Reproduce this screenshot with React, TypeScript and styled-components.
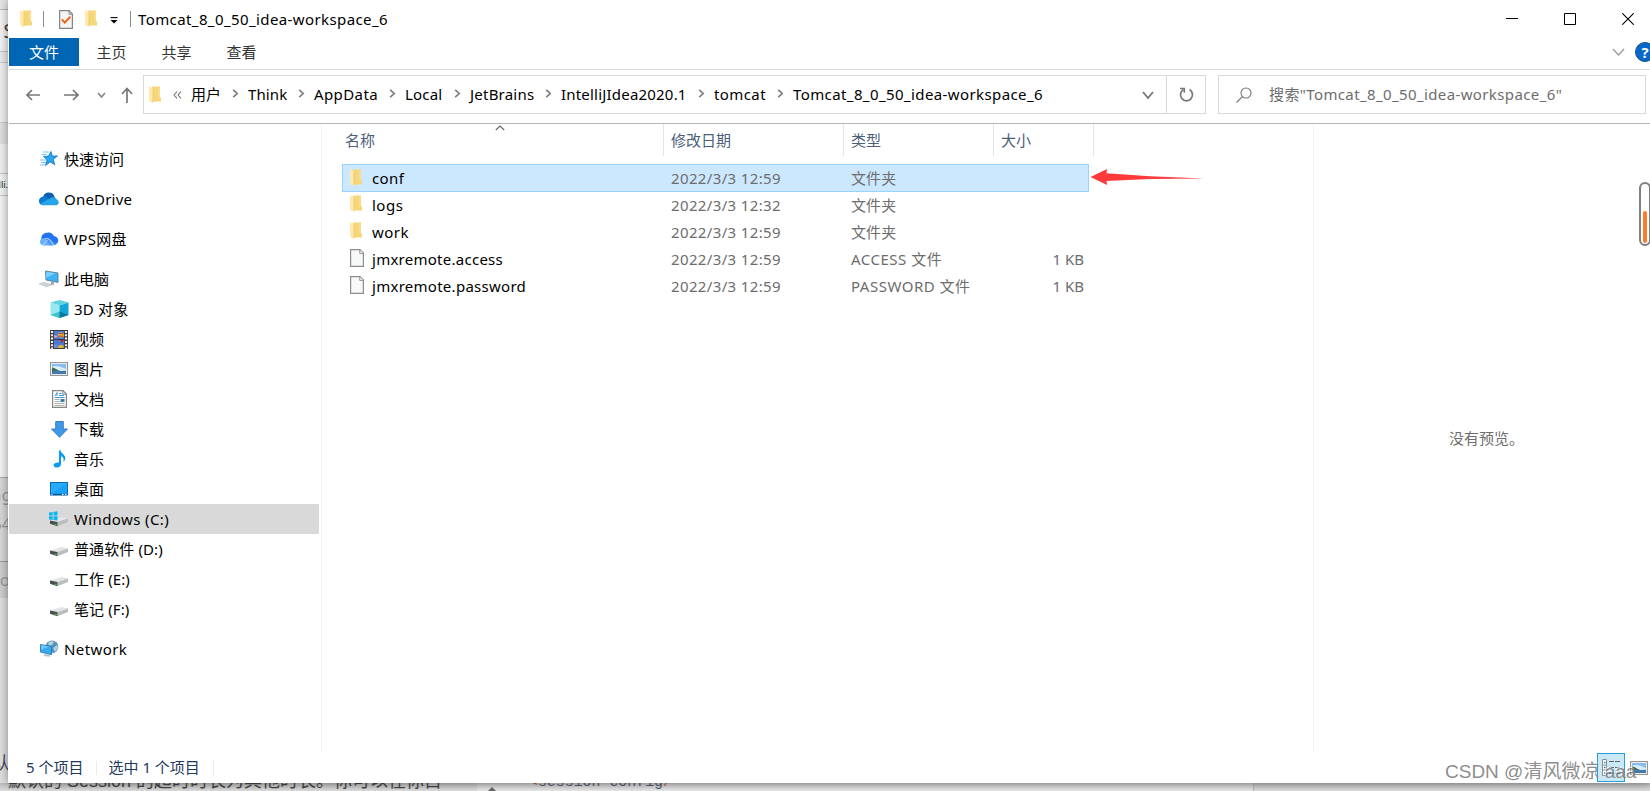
import React from 'react';
import styled, { createGlobalStyle, css } from 'styled-components';

const GlobalStyle = createGlobalStyle`
  * { box-sizing: border-box; }
  body { margin: 0; background: #dcdcdc; }
  svg { display: block; flex: none; }
`;

const Page = styled.div`
  display: grid;
  grid-template: 783px 8px / 8px 1fr;
  width: 1650px;
  height: 791px;
  overflow: hidden;
  font: 15px/20px 'Noto Sans', 'Noto Sans CJK SC', sans-serif;
  color: #000;
  white-space: nowrap;
`;

/* Page behind the window: left edge and bottom edge */
const BackEdge = styled.div`
  display: flex;
  flex-direction: column;
  overflow: hidden;
`;
const BackBlock = styled.div<{ $h: number; $bg: string; $line?: string }>`
  display: flex;
  align-items: center;
  justify-content: flex-end;
  flex: none;
  height: ${p => p.$h}px;
  background: ${p => p.$bg};
  border-bottom: 1px solid ${p => p.$line ?? p.$bg};
`;
const BackText = styled.span<{ $size: number; $color: string; $shift?: number }>`
  font-size: ${p => p.$size}px;
  color: ${p => p.$color};
  margin-right: ${p => p.$shift ?? 0}px;
`;
const BackFloor = styled.div`
  grid-column: 1 / 3;
  display: flex;
  height: 8px;
  overflow: hidden;
  background: linear-gradient(#b9b9b9, #dedede);
`;
const FloorText = styled.div`
  width: 469px;
  margin: -15px 0 0 8px;
  font-family: 'Liberation Sans', 'Noto Sans CJK SC', sans-serif;
  font-size: 18px;
  line-height: 26px;
  color: #444;
`;
const FloorCode = styled.div`
  display: flex;
  width: 777px;
  border-right: 1px solid #b4b4b4;
  background: linear-gradient(#c6c6c6, #e8e8e8);
  padding-left: 11px;
`;
const CodeLine = styled.div`
  margin: -11px 0 0 33px;
  font: 14.9px/20px 'Liberation Mono', monospace;
  color: #555b70;
  i { font-style: normal; color: #c75a28; }
`;

const Window = styled.div`
  position: relative;
  display: flex;
  flex-direction: column;
  background: #fff;
  box-shadow: 0 0 9px rgba(0, 0, 0, 0.42);
`;
const TitleBar = styled.header`
  display: flex;
  align-items: center;
  height: 38px;
  padding-left: 12px;
`;
const TitleRule = styled.div`
  width: 1px;
  height: 16px;
  background: #8e8e8e;
`;
const QuickMenu = styled.div`
  padding-top: 3px;
`;
const Title = styled.div`
  margin-left: 7px;
  flex: 1;
  letter-spacing: 0.4px;
`;
const Captions = styled.div`
  display: flex;
  align-items: center;
  gap: 46px;
  padding-right: 16px;
`;
const Spacer = styled.div<{ $w: number }>`
  flex: none;
  width: ${p => p.$w}px;
`;

const Ribbon = styled.nav`
  display: flex;
  align-items: center;
  height: 32px;
  padding-bottom: 3px;
  border-bottom: 1px solid #dadbdc;
  margin-left: 1px;
`;
const Tab = styled.div<{ $file?: boolean }>`
  display: flex;
  align-items: center;
  justify-content: center;
  width: ${p => (p.$file ? 70 : 65)}px;
  height: 28px;
  color: ${p => (p.$file ? '#fff' : '#333')};
  background: ${p => (p.$file ? '#0066b4' : 'transparent')};
`;
const Tabs = styled.div`
  display: flex;
  flex: 1;
`;
const Help = styled.div`
  flex: none;
  width: 20px;
  height: 20px;
  margin: 0 -5px 0 10px;
  border-radius: 50%;
  border: 1px solid #1c4f84;
  background: #0669c9;
  color: #fff;
  font: bold 15px/18px 'Open Sans', sans-serif;
  text-align: center;
`;

const AddressRow = styled.div`
  display: flex;
  align-items: center;
  height: 54px;
  padding: 0 4px 4px 17px;
  border-bottom: 1px solid #b5b5b5;
  margin-left: 1px;
`;
const Field = styled.div<{ $w: number }>`
  display: flex;
  align-items: center;
  flex: none;
  width: ${p => p.$w}px;
  height: 39px;
  border: 1px solid #d9d9d9;
`;
const Crumb = styled.div<{ $w: number; $track?: number }>`
  display: flex;
  align-items: center;
  justify-content: space-between;
  flex: none;
  width: ${p => p.$w}px;
  padding: 0 9px 2px 0;
  letter-spacing: ${p => p.$track ?? 0}px;
`;
const Refresh = styled.div`
  display: flex;
  align-items: center;
  justify-content: center;
  width: 39px;
  height: 37px;
  margin-left: auto;
  border-left: 1px solid #d9d9d9;
`;
const SearchText = styled.div`
  margin-left: 17px;
  padding-bottom: 2px;
  color: #6d6d6d;
  letter-spacing: 0.38px;
`;

const Body = styled.div`
  display: flex;
  height: 629px;
`;
const Sidebar = styled.aside`
  width: 314px;
  padding: 20px 2px 0 1px;
  border-right: 1px solid #f3f3f3;
`;
const SideItem = styled.div<{ $child?: boolean; $on?: boolean; $gap?: boolean; $track?: number }>`
  display: flex;
  align-items: center;
  gap: 4px;
  height: 30px;
  margin-bottom: ${p => (p.$gap ? 10 : 0)}px;
  padding-left: ${p => (p.$child ? 39 : 29)}px;
  background: ${p => (p.$on ? '#d9d9d9' : 'transparent')};
  letter-spacing: ${p => p.$track ?? 0}px;
`;
const IconSlot = styled.div`
  display: flex;
  align-items: center;
  justify-content: center;
  width: 22px;
  height: 22px;
`;
const Files = styled.main`
  width: 991px;
  padding-left: 20px;
`;
const columns = css`
  display: grid;
  grid-template-columns: 322px 180px 150px 100px;
`;
const Head = styled.div`
  ${columns}
  position: relative;
  height: 32px;
  margin-bottom: 8px;
`;
const HeadCell = styled.div`
  display: flex;
  align-items: center;
  padding: 0 0 1px 7px;
  border-right: 1px solid #e5e5e5;
  color: #4c607a;
  &:first-child { padding-left: 3px; }
`;
const SortMark = styled.div`
  position: absolute;
  left: 153px;
  top: 1px;
`;
const Row = styled.div<{ $on?: boolean }>`
  ${columns}
  align-items: center;
  width: 747px;
  height: ${p => (p.$on ? 28 : 27)}px;
  margin-bottom: ${p => (p.$on ? -1 : 0)}px;
  box-shadow: ${p => (p.$on ? 'inset 0 0 0 1px #99d1ff' : 'none')};
  background: ${p => (p.$on ? '#cce8ff' : 'transparent')};
`;
const Name = styled.div<{ $track: number }>`
  display: flex;
  align-items: center;
  gap: 8px;
  padding-left: 8px;
  letter-spacing: ${p => p.$track}px;
`;
const FileIcon = styled.div`
  width: 14px;
  height: 19px;
`;
const Cell = styled.div<{ $track?: number; $right?: boolean }>`
  padding: 0 ${p => (p.$right ? 10 : 0)}px 0 7px;
  color: #6d6d6d;
  letter-spacing: ${p => p.$track ?? 0}px;
  text-align: ${p => (p.$right ? 'right' : 'left')};
`;
const Preview = styled.section`
  flex: 1;
  display: flex;
  align-items: center;
  padding: 0 0 2px 135px;
  border-left: 1px solid #f3f3f3;
  color: #6d6d6d;
`;
const StatusBar = styled.footer`
  display: flex;
  align-items: center;
  height: 30px;
  padding-left: 18px;
  color: #1e395b;
`;
const StatusText = styled.div`
  padding-bottom: 2px;
`;
const StatusRule = styled.div`
  width: 1px;
  height: 14px;
  margin: 0 11px 0 13px;
  background: #ececec;
`;
const ViewSwitch = styled.div`
  display: flex;
  align-items: center;
  margin-left: auto;
  padding: 0 2px 1px 0;
  gap: 5px;
`;
const ViewButton = styled.div`
  display: flex;
  align-items: center;
  justify-content: center;
  width: 28px;
  height: 29px;
  border: 1px solid #26a0da;
  background: #cbe8f6;
`;
const Watermark = styled.div`
  position: absolute;
  left: 1437px;
  top: 758px;
  font: 19px/28px 'Liberation Sans', 'Noto Sans CJK SC', sans-serif;
  color: rgba(110, 110, 110, 0.8);
  text-shadow: -1px -1px 0 rgba(255, 255, 255, 0.65);
`;
const RedArrow = styled.div`
  position: absolute;
  left: 1082px;
  top: 168px;
`;
const Meter = styled.div`
  position: absolute;
  left: 1631px;
  top: 182px;
  display: flex;
  align-items: flex-end;
  justify-content: center;
  width: 12px;
  height: 64px;
  padding-bottom: 1px;
  border: 2px solid #7f7f7f;
  border-radius: 6px;
  background: #fff;
`;
const MeterFill = styled.div`
  width: 4px;
  height: 32px;
  border-radius: 2px;
  background: #ff7a26;
`;

const Folder = () => (
  <svg width="12" height="18" viewBox="0 0 12 18">
    <path d="M3 0.5h8v10.5l1 1v3.5H4z" fill="#f6d67a" />
    <path d="M9 0.5h2v11h-2z" fill="#f9dd8c" />
    <path d="M0 0.5h1.2l2.8 2v14.8L0 15z" fill="#ffe9ac" />
    <path d="M4 3v13" stroke="#eac664" strokeWidth=".8" />
  </svg>
);
const Sheet = () => (
  <svg width="14" height="18" viewBox="0 0 14 18">
    <path d="M.6.6h9.4l3.400 3.400v13.400H.6z" fill="#f7f8f8" stroke="#8d8d8d" strokeWidth="1.2" />
    <path d="M9.800 1v3.400h3.600" fill="#fff" stroke="#8d8d8d" />
  </svg>
);
const CheckSheet = () => (
  <svg width="14" height="19" viewBox="0 0 14 19">
    <path d="M.6.6h9.6l3.2 3.4v14.4H.6z" fill="#f4f4f4" stroke="#858585" strokeWidth="1.2" />
    <path d="M10 .8v3.4h3.4" fill="none" stroke="#858585" />
    <path d="M2.8 9.4l3 3.2 5.6-6" fill="none" stroke="#ef6219" strokeWidth="2" />
  </svg>
);
const Chevron = ({ w, h, color, sw = 1.5 }: { w: number; h: number; color: string; sw?: number }) => (
  <svg width={w} height={h}>
    <path d={`M1 1L${w / 2} ${h - 1}L${w - 1} 1`} fill="none" stroke={color} strokeWidth={sw} />
  </svg>
);
const CrumbArrow = () => (
  <svg width="7" height="10" viewBox="0 0 7 10">
    <path d="M1.2 0.8L5.2 4.5L1.2 8.2" fill="none" stroke="#7d7d7d" strokeWidth="1.7" />
  </svg>
);
const Picture = () => (
  <svg width="18" height="14" viewBox="0 0 18 14">
    <rect x=".6" y=".6" width="16.8" height="12.8" fill="#fff" stroke="#969696" strokeWidth="1.2" />
    <rect x="2" y="2" width="14" height="10" fill="#86bdf0" />
    <path d="M2 5q4-3 14 2v2H2z" fill="#d9edf7" />
    <path d="M2 5.5c3 0 5 3 9 3.5L2 10z" fill="#3b6d59" />
    <path d="M2 9.5l14-.8V12H2z" fill="#4178ad" />
  </svg>
);
const Star = () => (
  <svg width="20" height="18" viewBox="0 0 20 18">
    <path d="M4 2h6M2.500 4.500h5M1 10h6M2 12.500h5M1 15h5" stroke="#7cc3ee" strokeWidth="1" />
    <path d="M12 1.500l1.300 4.600 5.200-.1-4.200 3.300 1.300 5.400-4.300-2.800-4.700 3.600 1.500-5.700-3.600-3.300 5-.4z" fill="#2ba5ee" stroke="#137fc9" strokeWidth=".9" />
  </svg>
);
const OneDrive = () => (
  <svg width="20" height="14" viewBox="0 0 20 14">
    <path d="M4 5a6 6 0 0 1 11.5-.2L17 9H5z" fill="#0a5fae" />
    <path d="M4.6 13.2A4.2 4.2 0 0 1 3.6 4.8c2-.6 3.7-.2 5.2.8L13 9z" fill="#0c7bd2" />
    <path d="M1.500 11.500L13 5.200c3-.2 4.600.8 5 2.600 2.700 1.200 2.200 5.400-1 5.400H4.500c-1.300 0-2.300-.5-3-1.700z" fill="#27a4ea" />
  </svg>
);
const WpsCloud = () => (
  <svg width="20" height="14" viewBox="0 0 20 14">
    <path d="M2.500 8C1.500 3.500 5 .5 8.500.8c2.500-.8 5.500.6 6.200 3.200 4 .2 6 4.500 3.300 7.500L14 13z" fill="#2173f2" />
    <path d="M1 9.500C1 7 3.500 5.500 6 6.500l5 6.900H4.500C2.500 13.400 1 12 1 9.500z" fill="#69aefb" />
    <path d="M7 7.500c2.500-2 5-.5 6 1.500l4.500 3.300c-1 .8-2 1.100-3.500 1.100h-3.500z" fill="#4a94f8" />
    <path d="M5.800 7c4-1.800 5.200 1 8.700 6M3.500 13.300L8.500 8" stroke="#e5f1ff" strokeWidth=".8" fill="none" />
  </svg>
);
const Computer = () => (
  <svg width="20" height="18" viewBox="0 0 20 18">
    <path d="M6.500 1l12.500 2v9.500L7 10z" fill="#3fb2f4" stroke="#5f7d92" strokeWidth=".9" />
    <path d="M7.200 1.800l9 1.500-9 4.500z" fill="#7fd0fa" />
    <path d="M12 12l3 .6v2l-3-.6z" fill="#8f9ca5" />
    <path d="M10 13.500l6 1-1.500 1-6-1z" fill="#c4cbd0" />
    <path d="M0 14l5-1.800 7.500 2.700-5 1.800z" fill="#cfd5da" stroke="#b2b9be" strokeWidth=".5" />
  </svg>
);
const Cube = () => (
  <svg width="19" height="18" viewBox="0 0 19 18">
    <path d="M9.500 0l9 2.600-9 3L.5 2.600z" fill="#5fd3de" />
    <path d="M.5 2.600l9 3V18l-9-3z" fill="#97e9ee" />
    <path d="M18.500 2.600l-9 3V18l9-3z" fill="#12a7d8" />
    <path d="M.5 15l9-3.500V18z" fill="#3cc3cf" />
    <path d="M9.500 11.500l9 3.500-9 3z" fill="#067a9c" />
  </svg>
);
const Film = () => (
  <svg width="18" height="19" viewBox="0 0 18 19">
    <rect width="18" height="19" fill="#3a3a3a" />
    <path d="M2 1v18M16 1v18" stroke="#f3f3f3" strokeWidth="2.200" strokeDasharray="2 1.300" />
    <rect x="4" y="1" width="10" height="8" fill="#4c78d8" />
    <rect x="4" y="10" width="10" height="8" fill="#4c78d8" />
    <circle cx="11" cy="5" r="2.800" fill="#e8b923" />
    <path d="M9 3.600h4M9 6.200h4" stroke="#c93b2b" />
    <path d="M4 5.500h3v2H4z" fill="#e9a2bc" />
    <path d="M10 10h4l-1.500 2.600h-1z" fill="#b0342b" />
    <path d="M8 16.500c1-2 5-2 5.500 0V18H8z" fill="#e8b923" />
    <path d="M4 14.500h3V18H4z" fill="#6d8fde" />
  </svg>
);
const Document = () => (
  <svg width="15" height="18" viewBox="0 0 15 18">
    <path d="M.6.6h10.400l3.400 3.400v13.400H.6z" fill="#fdfdfd" stroke="#868686" strokeWidth="1.200" />
    <path d="M10.800.6v3.600h3.600" fill="none" stroke="#868686" />
    <path d="M5 2.500L3 6M5 2.500V6M7 3.500h2.500M7 5.500h5M2.500 7.500h10" fill="none" stroke="#3c9ccd" strokeWidth="1" />
    <path d="M2.500 9.500h5M2.500 11.500h5M2.500 13.500h10M2.500 15.500h10" stroke="#a5a5a5" strokeWidth=".9" />
    <rect x="8.500" y="9" width="4" height="3" fill="#3d81ab" />
  </svg>
);
const Download = () => (
  <svg width="17" height="17" viewBox="0 0 17 17">
    <path d="M4.700.5h7.600V8h4.200l-8 8.300L.5 8h4.200z" fill="#3f97e6" stroke="#2a78c0" strokeWidth=".9" />
  </svg>
);
const Note = () => (
  <svg width="13" height="18" viewBox="0 0 13 18">
    <path d="M6 .3h1.500c.3 3.300 5 4.200 4.800 8.200 0 1.200-.8 2.500-2 3.200.8-2.700.3-4.700-2.300-5.400V14c0 2-1.600 3.500-4 3.500-2 0-3.400-.9-3.400-2.300C.6 13.400 3 12 6 12.500z" fill="#0c9bf2" />
  </svg>
);
const Desktop = () => (
  <svg width="18" height="14" viewBox="0 0 18 14">
    <rect x=".5" y=".5" width="17" height="12.500" fill="#1ba1fb" stroke="#0a6bb0" />
    <path d="M1 12V1h16z" fill="#29abff" />
    <path d="M1 12.500h16" stroke="#075789" strokeWidth="1.300" />
    <path d="M1.500 12.500h1M12 12.500h1.500M15 12.500h1.500" stroke="#fff" />
  </svg>
);
const Drive = ({ win }: { win?: boolean }) => (
  <svg width="20" height="16" viewBox="0 0 20 16">
    <path d="M1 9.500l11.500-3.500 6.500 1.500-10.500 3.500z" fill="#e4e4e6" />
    <path d="M8.500 11L19 7.500v3.600L8.500 15.200z" fill="#bcbdc0" />
    <path d="M1 9.500l7.500 1.500v4.200L1 12.800z" fill="#4a4d4d" />
    <path d="M5.500 13.200l2 .5" stroke="#38b24b" strokeWidth="1.400" />
    {win && <path d="M0 1.500l3.700-.5v3.500H0zM4.500.9L8.500.3v4.200h-4zM0 5.300h3.700v3.600L0 8.400zM4.500 5.300h4v4.300l-4-.6z" fill="#0fb6ee" />}
  </svg>
);
const Network = () => (
  <svg width="19" height="18" viewBox="0 0 19 18">
    <circle cx="12" cy="6.800" r="6.300" fill="#5793b7" />
    <path d="M8 3c2-2.500 5-2 6-1l-2 3-3 1zM13 8l4-3 1 3-3 4z" fill="#a9d5e4" />
    <path d="M.5 4.500l11 1.800v8.400L.5 12z" fill="#38abee" stroke="#2b7bb2" strokeWidth=".9" />
    <path d="M1 5l8 1.500L1 10z" fill="#6bcaf8" />
    <path d="M5 14l5 1.200v1.500L3.500 16z" fill="#b7c0c6" />
  </svg>
);
const DetailsGlyph = () => (
  <svg width="18" height="17" viewBox="0 0 18 17">
    <path d="M.5.5h4v16h-4zM.5 6h4M.5 11h4" fill="#fff" stroke="#8c8c8c" />
    <path d="M2 3.500h1.500M2 8.500h1.500M2 14h1.500" stroke="#2a73b8" strokeWidth="1.500" />
    <path d="M7 2.500h5M13 2.500h5M7 8.500h5M13 8.500h5M7 14.500h5M13 14.500h5" stroke="#666" />
  </svg>
);

const places: { icon: React.ReactNode; label: string; child?: boolean; gap?: boolean; on?: boolean; track?: number }[] = [
  { icon: <Star />, label: '快速访问', gap: true },
  { icon: <OneDrive />, label: 'OneDrive', gap: true, track: 0.2 },
  { icon: <WpsCloud />, label: 'WPS网盘', gap: true, track: 0.3 },
  { icon: <Computer />, label: '此电脑' },
  { icon: <Cube />, label: '3D 对象', child: true, track: 0.2 },
  { icon: <Film />, label: '视频', child: true },
  { icon: <Picture />, label: '图片', child: true },
  { icon: <Document />, label: '文档', child: true },
  { icon: <Download />, label: '下载', child: true },
  { icon: <Note />, label: '音乐', child: true },
  { icon: <Desktop />, label: '桌面', child: true },
  { icon: <Drive win />, label: 'Windows (C:)', child: true, on: true, track: 0.38 },
  { icon: <Drive />, label: '普通软件 (D:)', child: true, track: 0.1 },
  { icon: <Drive />, label: '工作 (E:)', child: true, track: 0.1 },
  { icon: <Drive />, label: '笔记 (F:)', child: true, gap: true, track: 0.1 },
  { icon: <Network />, label: 'Network', track: 0.42 },
];

const crumbs: [string, number, number][] = [
  ['用户', 57, 0],
  ['Think', 66, 0.1],
  ['AppData', 91, 0.4],
  ['Local', 65, 0.2],
  ['JetBrains', 91, 0.22],
  ['IntelliJIdea2020.1', 153, 0.2],
  ['tomcat', 79, 0.4],
];

const files = [
  { name: 'conf', date: '2022/3/3 12:59', type: '文件夹', dir: true, on: true, track: 0.4 },
  { name: 'logs', date: '2022/3/3 12:32', type: '文件夹', dir: true, track: 0.5 },
  { name: 'work', date: '2022/3/3 12:59', type: '文件夹', dir: true, track: 0.45 },
  { name: 'jmxremote.access', date: '2022/3/3 12:59', type: 'ACCESS 文件', size: '1 KB', track: 0.26 },
  { name: 'jmxremote.password', date: '2022/3/3 12:59', type: 'PASSWORD 文件', size: '1 KB', track: 0.27 },
];

export default function App() {
  return (
    <Page>
      <GlobalStyle />
      <BackEdge>
        <BackBlock $h={10} $bg="#e6e6e6" $line="#b8b8b8" />
        <BackBlock $h={42} $bg="#f2f2f2" $line="#c2c2c2"><BackText $size={19} $color="#444" $shift={-6}>S</BackText></BackBlock>
        <BackBlock $h={11} $bg="#e9e9e9" $line="#c9c9c9" />
        <BackBlock $h={60} $bg="#eeeeee" $line="#c9c9c9" />
        <BackBlock $h={21} $bg="#dedede" />
        <BackBlock $h={30} $bg="#efefef" $line="#c5c5c5" />
        <BackBlock $h={22} $bg="#f1f1f1" $line="#c5c5c5"><BackText $size={9} $color="#222">elli.</BackText></BackBlock>
        <BackBlock $h={282} $bg="#f2f2f2" $line="#a9a9a9" />
        <BackBlock $h={34} $bg="#d6d6d6"><BackText $size={17} $color="#999" $shift={-4}>ng</BackText></BackBlock>
        <BackBlock $h={24} $bg="#d6d6d6"><BackText $size={16} $color="#999" $shift={-3}>54</BackText></BackBlock>
        <BackBlock $h={26} $bg="#d6d6d6" $line="#999" />
        <BackBlock $h={36} $bg="#cdcdcd"><BackText $size={17} $color="#999" $shift={-2}>o</BackText></BackBlock>
        <BackBlock $h={145} $bg="#dedede" />
        <BackBlock $h={40} $bg="#dedede"><BackText $size={17} $color="#44485c" $shift={-2}>认</BackText></BackBlock>
      </BackEdge>

      <Window>
        <TitleBar>
          <Folder />
          <Spacer $w={11} />
          <TitleRule />
          <Spacer $w={15} />
          <CheckSheet />
          <Spacer $w={12} />
          <Folder />
          <Spacer $w={13} />
          <QuickMenu>
            <svg width="8" height="7" viewBox="0 0 8 7"><path d="M.5.6h7" stroke="#000" strokeWidth="1.100" /><path d="M.5 3h7L4 6.500z" /></svg>
          </QuickMenu>
          <Spacer $w={12} />
          <TitleRule />
          <Title>Tomcat_8_0_50_idea-workspace_6</Title>
          <Captions>
            <svg width="12" height="12"><path d="M0 5.500h12" stroke="#000" /></svg>
            <svg width="12" height="12"><path d="M.5.5h11v11H.5z" fill="none" stroke="#000" /></svg>
            <svg width="12" height="12"><path d="M.3.3l11.400 11.400M11.700.3L.3 11.700" stroke="#000" strokeWidth="1.100" /></svg>
          </Captions>
        </TitleBar>

        <Ribbon>
          <Tabs>
            <Tab $file>文件</Tab>
            <Tab>主页</Tab>
            <Tab>共享</Tab>
            <Tab>查看</Tab>
          </Tabs>
          <Chevron w={13} h={8} color="#9a9a9a" sw={1.3} />
          <Help>?</Help>
        </Ribbon>

        <AddressRow>
          <svg width="14" height="12" viewBox="0 0 14 12"><path d="M14 6H1M6 1L1 6l5 5" fill="none" stroke="#777" strokeWidth="1.700" /></svg>
          <Spacer $w={24} />
          <svg width="15" height="12" viewBox="0 0 15 12"><path d="M0 6h14M9 1l5 5-5 5" fill="none" stroke="#777" strokeWidth="1.700" /></svg>
          <Spacer $w={18} />
          <Chevron w={9} h={6} color="#888" sw={1.7} />
          <Spacer $w={15} />
          <svg width="12" height="16" viewBox="0 0 12 16"><path d="M6 16V1.500M1 7l5-5.500L11 7" fill="none" stroke="#777" strokeWidth="1.700" /></svg>
          <Spacer $w={10} />
          <Field $w={1063}>
            <Spacer $w={5} />
            <Folder />
            <Spacer $w={12} />
            <svg width="9" height="8" viewBox="0 0 9 8"><path d="M4 .7L1 4l3 3.300M8 .7L5 4l3 3.300" fill="none" stroke="#777" strokeWidth="1.100" /></svg>
            <Spacer $w={9} />
            {crumbs.map(([label, w, track]) => (
              <Crumb key={label} $w={w} $track={track}>{label}<CrumbArrow /></Crumb>
            ))}
            <Crumb $w={349} $track={0.4}>Tomcat_8_0_50_idea-workspace_6</Crumb>
            <Chevron w={12} h={8} color="#777" sw={1.8} />
            <Refresh>
              <svg width="15" height="15" viewBox="0 0 15 15">
                <path d="M4.500 2.600A6 6 0 1 0 10.500 2.600" fill="none" stroke="#777" strokeWidth="1.700" />
                <path d="M1 1.500h4.300v4.300" fill="none" stroke="#777" strokeWidth="1.600" />
              </svg>
            </Refresh>
          </Field>
          <Spacer $w={12} />
          <Field $w={428}>
            <Spacer $w={17} />
            <svg width="16" height="16" viewBox="0 0 16 16"><circle cx="10" cy="6" r="5" fill="none" stroke="#777" strokeWidth="1.100" /><path d="M6.500 9.500L.5 15.500" stroke="#777" strokeWidth="1.100" /></svg>
            <SearchText>搜索"Tomcat_8_0_50_idea-workspace_6"</SearchText>
          </Field>
        </AddressRow>

        <Body>
          <Sidebar>
            {places.map(p => (
              <SideItem key={p.label} $child={p.child} $gap={p.gap} $on={p.on} $track={p.track}>
                <IconSlot>{p.icon}</IconSlot>
                {p.label}
              </SideItem>
            ))}
          </Sidebar>
          <Files>
            <Head>
              <HeadCell>名称</HeadCell>
              <HeadCell>修改日期</HeadCell>
              <HeadCell>类型</HeadCell>
              <HeadCell>大小</HeadCell>
              <SortMark>
                <svg width="10" height="6" viewBox="0 0 10 6"><path d="M.8 5L5 1l4.200 4" fill="none" stroke="#666" strokeWidth="1.100" /></svg>
              </SortMark>
            </Head>
            {files.map(f => (
              <Row key={f.name} $on={f.on}>
                <Name $track={f.track}>
                  <FileIcon>{f.dir ? <Folder /> : <Sheet />}</FileIcon>
                  {f.name}
                </Name>
                <Cell $track={0.36}>{f.date}</Cell>
                <Cell $track={f.size ? 0.5 : 0.1}>{f.type}</Cell>
                <Cell $right>{f.size}</Cell>
              </Row>
            ))}
          </Files>
          <Preview>没有预览。</Preview>
        </Body>

        <StatusBar>
          <StatusText>5 个项目</StatusText>
          <StatusRule />
          <StatusText>选中 1 个项目</StatusText>
          <StatusRule />
          <ViewSwitch>
            <ViewButton><DetailsGlyph /></ViewButton>
            <Picture />
          </ViewSwitch>
        </StatusBar>

        <RedArrow>
          <svg width="114" height="18" viewBox="0 0 114 18">
            <path d="M.5 9L17 1l-.5 4.200L60 8.200l54 2.300-54 .6-43.500 2L17 17z" fill="#ff3a3a" />
          </svg>
        </RedArrow>
        <Meter><MeterFill /></Meter>
        <Watermark>CSDN @清风微凉 aaa</Watermark>
      </Window>

      <BackFloor>
        <FloorText>默认的 Session 的超时时长为其他时长。你可以在你目</FloorText>
        <FloorCode>
          <svg width="8" height="8" viewBox="0 0 8 8"><path d="M4 4l4 4H0z" fill="#666" /></svg>
          <CodeLine><i>&lt;</i>session-config<i>/</i></CodeLine>
        </FloorCode>
      </BackFloor>
    </Page>
  );
}
